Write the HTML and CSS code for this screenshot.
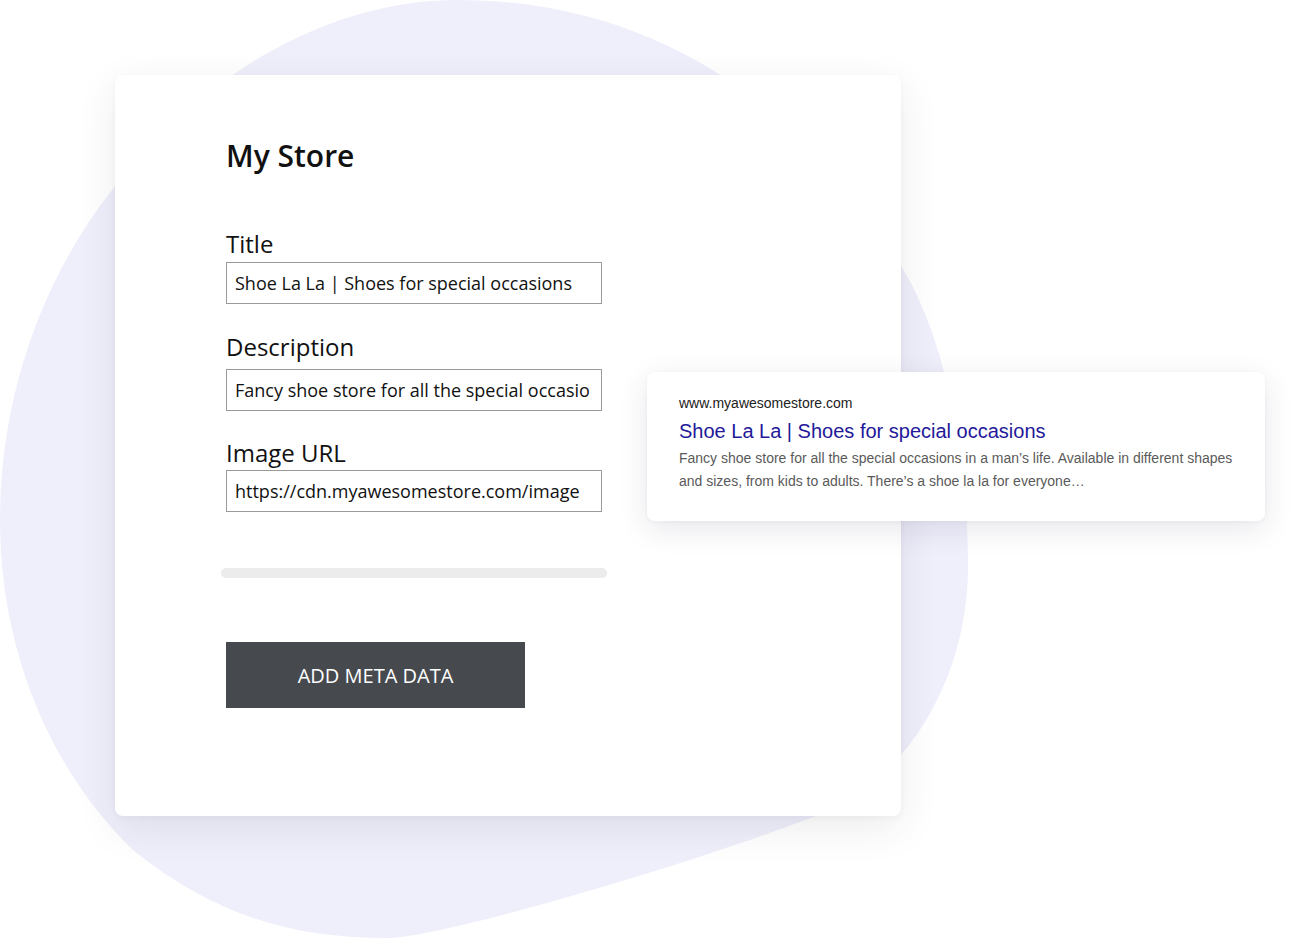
FILE: index.html
```html
<!DOCTYPE html>
<html lang="en">
<head>
<meta charset="utf-8">
<title>My Store – Meta data</title>
<link rel="stylesheet" href="styles.css">
</head>
<body>
<div class="stage">
  <svg class="blob" width="1309" height="939" viewBox="0 0 1309 939" aria-hidden="true">
    <path d="M458,0 C325,0 200,78 115,186 C40,280 0,400 0,520 C0,650 50,770 133,850 C220,920 300,938 387,938 C440,938 700,862 823,813 C905,780 968,680 968,567 C968,440 940,330 903,269 C840,160 700,0 458,0 Z" fill="#efeffb"/>
  </svg>

  <main class="store-card">
    <h1 class="store-title">My Store</h1>

    <div class="field field-title">
      <label class="field-label" for="f-title">Title</label>
      <input class="field-input" id="f-title" type="text" value="Shoe La La | Shoes for special occasions">
    </div>

    <div class="field field-desc">
      <label class="field-label" for="f-desc">Description</label>
      <input class="field-input" id="f-desc" type="text" value="Fancy shoe store for all the special occasio">
    </div>

    <div class="field field-image">
      <label class="field-label" for="f-img">Image URL</label>
      <input class="field-input" id="f-img" type="text" value="https://cdn.myawesomestore.com/image">
    </div>

    <div class="progress"></div>

    <button class="add-btn" type="button">ADD META DATA</button>
  </main>

  <aside class="serp-card">
    <div class="serp-url">www.myawesomestore.com</div>
    <div class="serp-title">Shoe La La | Shoes for special occasions</div>
    <p class="serp-desc">Fancy shoe store for all the special occasions in a man’s life. Available in different shapes and sizes, from kids to adults. There’s a shoe la la for everyone…</p>
  </aside>
</div>
</body>
</html>
```

FILE: styles.css
```css
* { box-sizing: border-box; }

html, body {
  margin: 0;
  padding: 0;
  background: #ffffff;
}

body {
  font-family: "Open Sans", "Liberation Sans", sans-serif;
  color: #111;
}

.stage {
  position: relative;
  width: 1309px;
  height: 939px;
  overflow: hidden;
  padding: 75px 0 0 115px;
}

.blob {
  position: absolute;
  left: 0;
  top: 0;
  z-index: 0;
}

.store-card {
  position: relative;
  z-index: 1;
  width: 786px;
  height: 741px;
  background: #fff;
  border-radius: 8px;
  box-shadow: 0 12px 40px rgba(40, 40, 70, 0.09), 0 2px 6px rgba(40, 40, 70, 0.04);
  padding: 61px 0 0 111px;
  display: flex;
  flex-direction: column;
  align-items: flex-start;
}

.store-title {
  margin: 0 0 52px;
  font-size: 30px;
  line-height: 40px;
  font-weight: 600;
  color: #111;
}

.field {
  display: flex;
  flex-direction: column;
  width: 376px;
}

.field-desc { margin-top: 27px; }
.field-image { margin-top: 26px; }

.field-label {
  font-size: 24px;
  line-height: 32px;
  font-weight: 400;
  color: #111;
  margin-bottom: 2px;
}

.field-desc .field-label { margin-bottom: 6px; }
.field-image .field-label { margin-bottom: 1px; }

.field-input {
  width: 376px;
  height: 42px;
  margin: 0;
  border: 1px solid #9a9a9a;
  border-radius: 0;
  padding: 0 8px;
  font-family: "Open Sans", "Liberation Sans", sans-serif;
  font-size: 18px;
  color: #111;
  background: #fff;
  outline: none;
}

.progress {
  width: 386px;
  height: 10px;
  margin: 56px 0 0 -5px;
  background: #ececec;
  border-radius: 5px;
}

.add-btn {
  margin-top: 64px;
  width: 299px;
  height: 66px;
  border: 0;
  border-radius: 0;
  background: #464a4e;
  color: #fff;
  font-family: "Open Sans", "Liberation Sans", sans-serif;
  font-size: 20px;
  font-weight: 500;
  letter-spacing: 0;
  padding: 0;
}

.serp-card {
  position: absolute;
  z-index: 2;
  left: 647px;
  top: 372px;
  width: 618px;
  height: 149px;
  background: #fff;
  border-radius: 8px;
  box-shadow: 0 8px 30px rgba(40, 40, 70, 0.11), 0 1px 4px rgba(40, 40, 70, 0.04);
  padding: 23px 28px 0 32px;
  font-family: "Liberation Sans", Arial, sans-serif;
}

.serp-url {
  font-size: 14px;
  line-height: 17px;
  color: #222;
}

.serp-title {
  margin-top: 5px;
  font-size: 20px;
  line-height: 28px;
  color: #23199a;
}

.serp-desc {
  margin: 2px 0 0;
  font-size: 14px;
  line-height: 23px;
  color: #5a5a5a;
}
```
